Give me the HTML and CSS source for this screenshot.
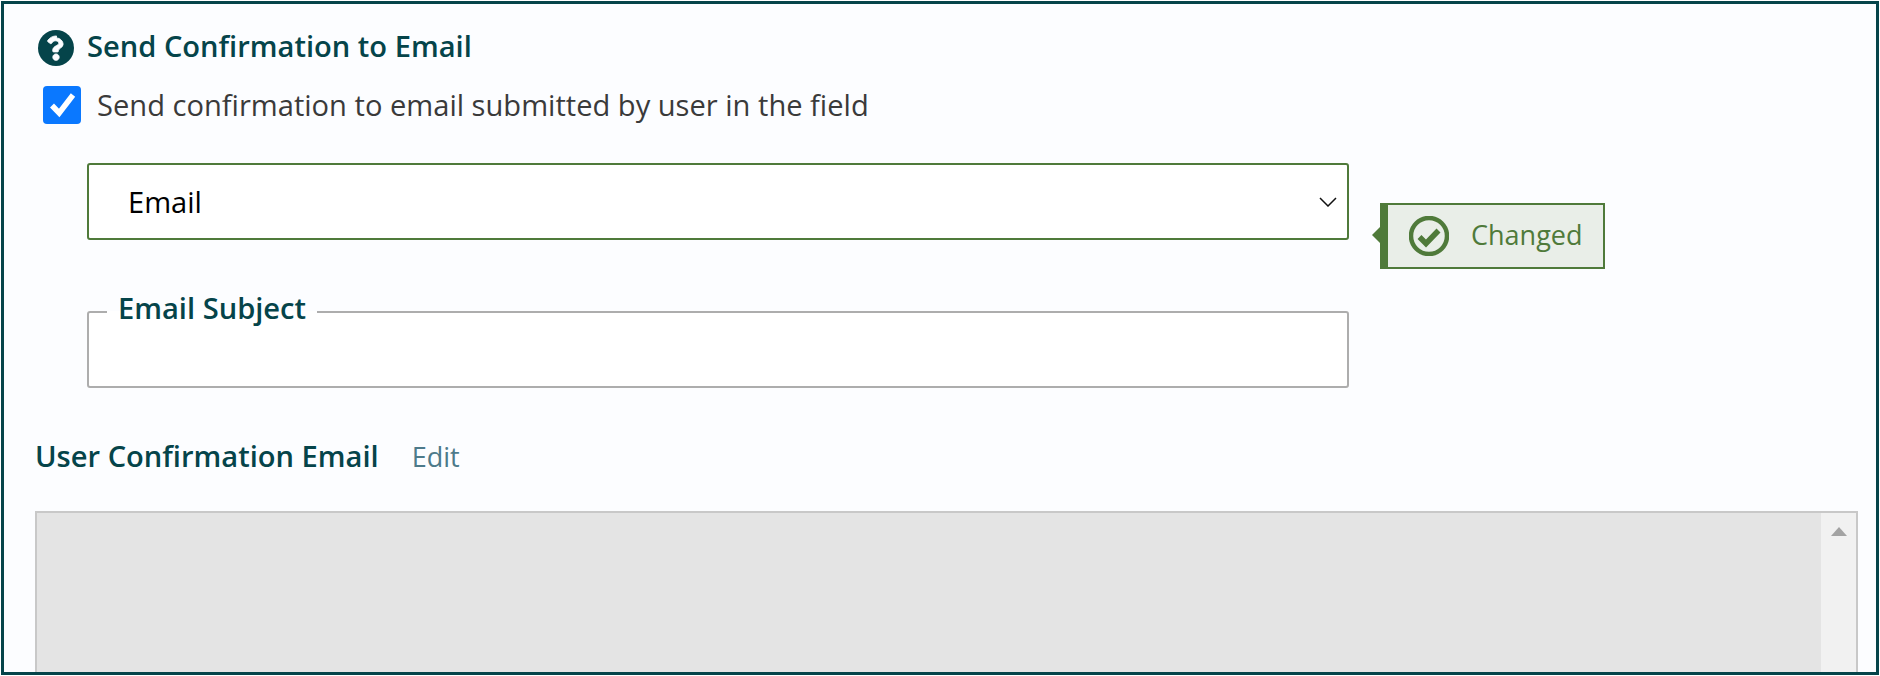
FILE: index.html
```html
<!DOCTYPE html>
<html lang="en">
<head>
<meta charset="utf-8">
<title>Send Confirmation to Email</title>
<link rel="stylesheet" href="styles.css">
</head>
<body>
<main class="frame">
  <div class="heading-row">
    <svg class="help-icon" viewBox="8 8 496 496" aria-hidden="true"><circle cx="256" cy="256" r="248"/><path class="help-mark" d="M262.655 90c-54.497 0-89.255 22.957-121.075 62.155-4.124 5.079-3.112 12.644 2.143 16.504l33.887 25.695c5.19 3.94 12.59 3.003 16.7-2.06 17.436-22.114 29.39-34.938 55.93-34.938 19.89 0 44.49 12.8 44.49 32.086 0 14.58-12.036 22.068-31.673 33.077C240.161 235.7 210 252.1 210 290v8c0 6.627 5.373 12 12 12h56c6.627 0 12-5.373 12-12v-6c0-36.5 64-37.9 64-88 0-38-39-86-91.345-86zM256 338c-24.3 0-44 19.7-44 44s19.7 44 44 44 44-19.7 44-44-19.7-44-44-44z"/></svg>
    <h2 class="heading">Send Confirmation to Email</h2>
  </div>
  <label class="check-row">
    <span class="checkbox"><svg viewBox="0 0 38 38" aria-hidden="true"><path d="M9 19.5l7.2 7.5L30 9"/></svg></span>
    <span class="check-label">Send confirmation to email submitted by user in the field</span>
  </label>
  <div class="select-row">
    <div class="select">
      <span>Email</span>
      <svg class="chevron" viewBox="0 0 18 10" aria-hidden="true"><path d="M1 1l8 8 8-8"/></svg>
    </div>
    <div class="changed">
      <svg class="changed-icon" viewBox="0 0 40 40" aria-hidden="true"><circle cx="20" cy="20" r="18"/><path d="M10.5 21l6.5 6.5 12.5-13"/></svg>
      <span class="changed-text">Changed</span>
    </div>
  </div>
  <fieldset class="subject">
    <legend>Email Subject</legend>
  </fieldset>
  <div class="editor-head">
    <h3 class="editor-title">User Confirmation Email</h3>
    <a class="edit-link">Edit</a>
  </div>
  <div class="editor">
    <div class="editor-body"></div>
    <div class="scrollbar"><span class="scroll-up"></span></div>
  </div>
</main>
</body>
</html>
```
FILE: styles.css
```css
* { box-sizing: border-box; }
html, body { margin: 0; padding: 0; background: #fff; }
body { font-family: "Open Sans", sans-serif; }
.frame {
  margin: 1px;
  width: 1878px;
  height: 674px;
  border: 3px solid #05444a;
  background: #fcfdff;
  overflow: hidden;
  padding: 26px 20px 0 31px;
}
.heading-row { display: flex; align-items: center; height: 36px; margin-left: 3px; }
.help-icon { width: 36px; height: 36px; fill: #05444a; flex: none; }
.help-mark { fill: #fcfdff; stroke: #fcfdff; stroke-width: 12; }
.heading { margin: 0 0 0 13px; padding-bottom: 4px; font-size: 29.1px; font-weight: 600; color: #05444a; line-height: 36px; }
.check-row { display: flex; align-items: center; margin: 20px 0 0 8px; height: 38px; }
.checkbox { width: 38px; height: 38px; border-radius: 4px; background: #0a78ff; flex: none; }
.checkbox svg { display: block; width: 38px; height: 38px; fill: none; stroke: #fff; stroke-width: 5.5; }
.check-label { margin-left: 16px; font-size: 29.1px; color: #3a3a3a; }
.select-row { display: flex; align-items: flex-start; margin: 39px 0 0 52px; }
.select {
  width: 1262px; height: 77px; border: 2px solid #4f7a3a; border-radius: 3px; background: #fff;
  display: flex; align-items: center; justify-content: space-between;
  padding: 0 10px 0 39px; font-size: 29.1px; color: #000;
}
.chevron { width: 18px; height: 10px; fill: none; stroke: #111; stroke-width: 1.5; }
.changed {
  position: relative; margin: 40px 0 0 31px; width: 225px; height: 66px;
  border: 2px solid #4f7a3a; border-left-width: 8px; background: #e9eee8;
  display: flex; align-items: center; padding-left: 21px;
  font-size: 27px; color: #4f7a3a;
}
.changed::before {
  content: ""; position: absolute; left: -16px; top: 22px; width: 0; height: 0;
  border: 8px solid transparent; border-left-width: 0; border-right-color: #4f7a3a; border-right-width: 8px;
}
.changed-icon { width: 40px; height: 40px; fill: none; stroke: #4f7a3a; flex: none; margin-right: 22px; }
.changed-icon circle { stroke-width: 4.5; }
.changed-icon path { stroke-width: 5.5; }
.changed-text { padding-bottom: 3px; }
.subject { margin: 22px 0 0 52px; width: 1262px; height: 97px; border: 2px solid #adadad; border-radius: 3px; background: #fff; padding: 0 0 0 18px; }
.subject legend { font-size: 29.1px; font-weight: 600; color: #05444a; padding: 0 11px 7px; line-height: 34px; }
.editor-head { display: flex; align-items: center; margin-top: 50px; height: 36px; }
.editor-title { margin: 0; font-size: 29.1px; font-weight: 600; color: #05444a; }
.edit-link { margin-left: 33px; font-size: 27px; color: #4d7a8a; }
.editor { display: flex; margin-top: 37px; height: 180px; border: 2px solid #c8c8c8; background: #e4e4e4; width: 1823px; }
.editor-body { flex: 1; }
.scrollbar { width: 35px; background: #f1f1f1; display: flex; justify-content: center; padding-top: 14px; }
.scroll-up { width: 0; height: 0; border: 8.5px solid transparent; border-top-width: 0; border-bottom: 9px solid #a3a3a3; }
```
